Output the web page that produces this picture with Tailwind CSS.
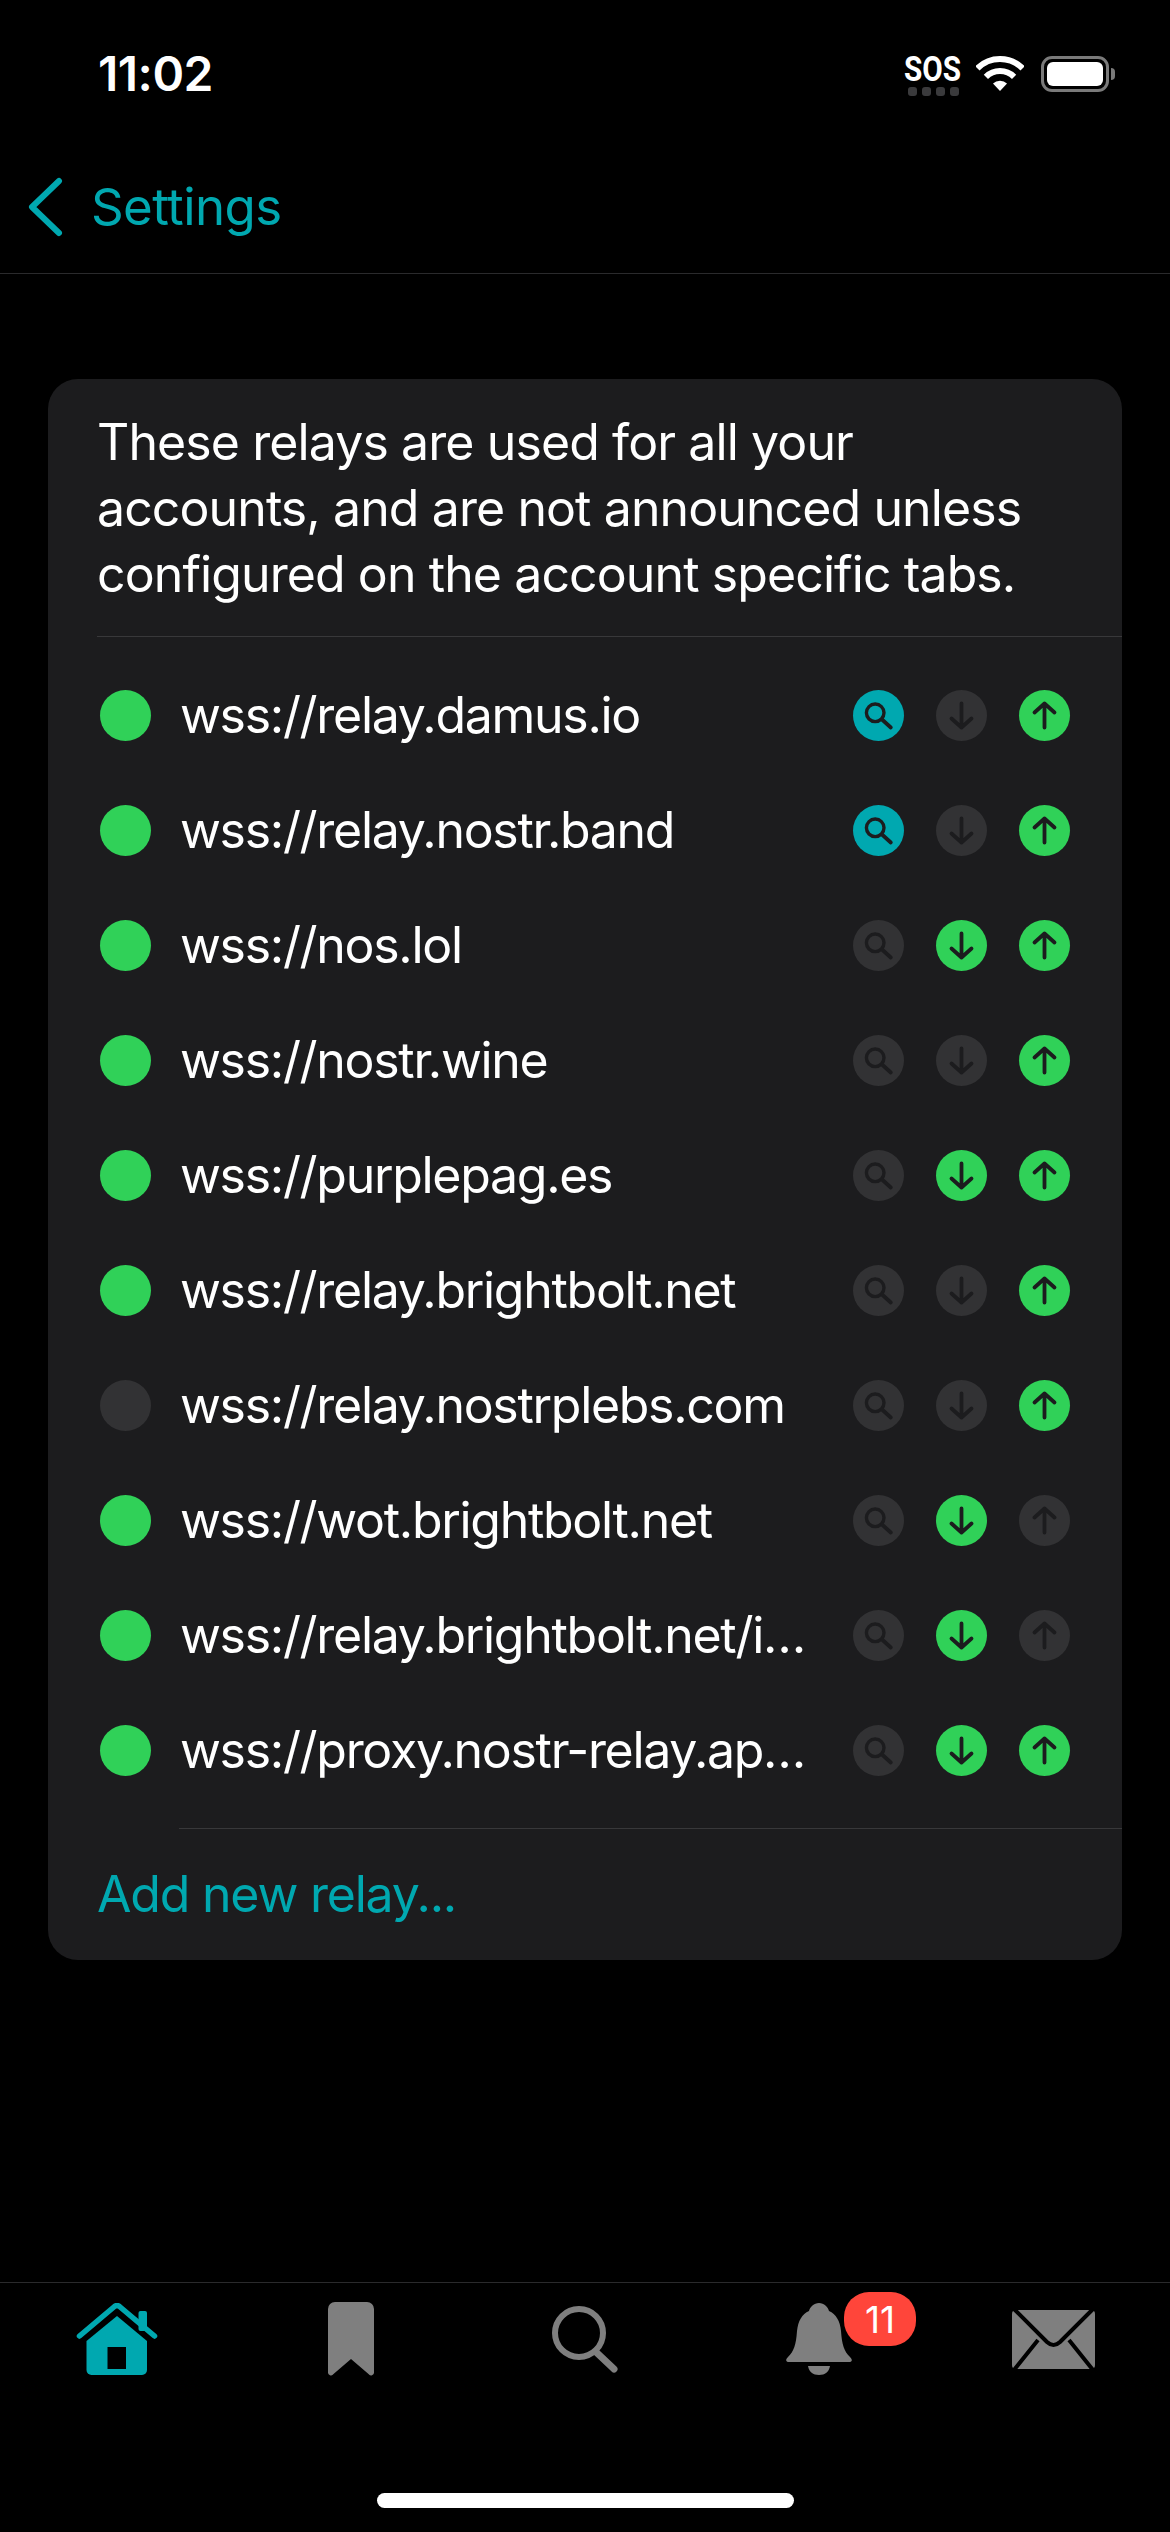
<!DOCTYPE html>
<html lang="en">
  <head>
    <meta charset="UTF-8" />
    <meta name="viewport" content="width=device-width, initial-scale=1.0" />
    <title>Relays</title>
    <script src="https://cdn.jsdelivr.net/npm/@tailwindcss/browser@4"></script>
  </head>
  <body class="bg-black">
    <svg class="hidden">
      <symbol id="i-search" viewBox="-25.5 -25.5 51 51">
        <circle cx="-3.3" cy="-2.7" r="8.8" fill="none" stroke="#1c1c1e" stroke-width="3.4" />
        <path d="M3.5 4 L12.3 12" fill="none" stroke="#1c1c1e" stroke-width="3.8" stroke-linecap="round" />
      </symbol>
      <symbol id="i-down" viewBox="-25.5 -25.5 51 51">
        <path d="M0 -12 V12 M-10 3 L0 12 L10 3" fill="none" stroke="#1c1c1e" stroke-width="3.8" stroke-linecap="round" stroke-linejoin="round" />
      </symbol>
      <symbol id="i-up" viewBox="-25.5 -25.5 51 51">
        <path d="M0 12 V-12 M-10 -3 L0 -12 L10 -3" fill="none" stroke="#1c1c1e" stroke-width="3.8" stroke-linecap="round" stroke-linejoin="round" />
      </symbol>
    </svg>

    <div class="w-[1170px] h-[2532px] flex flex-col bg-black text-white font-['Inter',sans-serif]">
      <!-- status bar -->
      <div class="h-[110px] shrink-0 flex items-start justify-between pl-[98px] pr-[55px] pt-[46px]">
        <span class="text-[48px] leading-[56px] font-semibold tracking-[-0.5px]">11:02</span>
        <div class="flex items-start">
          <div class="w-[54px] flex flex-col items-center mt-[10px]">
            <span class="font-['Roboto',sans-serif] text-[35px] leading-[27px] font-bold scale-x-[0.85]">SOS</span>
            <div class="flex gap-[5px] mt-[4px]">
              <div class="w-[9px] h-[9px] rounded-[3px] bg-[#3a3a3c]"></div>
              <div class="w-[9px] h-[9px] rounded-[3px] bg-[#3a3a3c]"></div>
              <div class="w-[9px] h-[9px] rounded-[3px] bg-[#3a3a3c]"></div>
              <div class="w-[9px] h-[9px] rounded-[3px] bg-[#3a3a3c]"></div>
            </div>
          </div>
          <svg class="ml-[16px] mt-[9px]" width="48" height="36" viewBox="0 0 48 36">
            <path d="M1.4 13.4 A32 32 0 0 1 46.6 13.4" fill="none" stroke="#fff" stroke-width="6" />
            <path d="M9.9 21.9 A20 20 0 0 1 38.1 21.9" fill="none" stroke="#fff" stroke-width="6" />
            <path d="M24 36 L17 28.5 A10 10 0 0 1 31 28.5 Z" fill="#fff" />
          </svg>
          <div class="ml-[17px] mt-[10px] w-[68px] h-[36px] rounded-[11px] border-[3px] border-[#7a7a7a] p-[3px]">
            <div class="w-full h-full rounded-[6px] bg-white"></div>
          </div>
          <div class="ml-[2px] mt-[22px] w-[4px] h-[12px] rounded-r-[4px] bg-[#7a7a7a]"></div>
        </div>
      </div>

      <!-- nav -->
      <div class="h-[164px] shrink-0 border-b border-[#2a2a2c] flex items-start pl-[27px] pt-[66px] text-[#00a8b0]">
        <svg width="36" height="60" viewBox="0 0 36 60" class="mt-[1px]">
          <path d="M32 4 L5 30 L32 56" fill="none" stroke="currentColor" stroke-width="6" stroke-linecap="round" stroke-linejoin="round" />
        </svg>
        <span class="ml-[28px] mt-[1px] text-[51px] leading-[60px] tracking-[-0.6px]">Settings</span>
      </div>

      <!-- relay card -->
      <main class="flex-1 pt-[105px] px-[48px]">
        <div class="bg-[#1c1c1e] rounded-[30px] text-[50px] tracking-[-1.3px]">
          <div class="ml-[49px] pt-[30px] pb-[29px] pr-[30px] border-b border-[#38383a] leading-[66px] tracking-[-0.9px]">
            These relays are used for all your<br />accounts, and are not announced unless<br />configured on the account specific tabs.
          </div>

          <div class="pt-[21px] pl-[52px] pr-[52px]">
            <div class="h-[115px] flex items-center">
              <div class="w-[51px] h-[51px] rounded-full bg-[#30d158] shrink-0"></div>
              <div class="ml-[29px] mr-[47px] flex-1 min-w-0 truncate">wss://relay.damus.io</div>
              <div class="flex gap-[32px] shrink-0">
                <div class="w-[51px] h-[51px] rounded-full bg-[#00a8b0]"><svg class="w-full h-full"><use href="#i-search" /></svg></div>
                <div class="w-[51px] h-[51px] rounded-full bg-[#323234]"><svg class="w-full h-full"><use href="#i-down" /></svg></div>
                <div class="w-[51px] h-[51px] rounded-full bg-[#30d158]"><svg class="w-full h-full"><use href="#i-up" /></svg></div>
              </div>
            </div>
            <div class="h-[115px] flex items-center">
              <div class="w-[51px] h-[51px] rounded-full bg-[#30d158] shrink-0"></div>
              <div class="ml-[29px] mr-[47px] flex-1 min-w-0 truncate">wss://relay.nostr.band</div>
              <div class="flex gap-[32px] shrink-0">
                <div class="w-[51px] h-[51px] rounded-full bg-[#00a8b0]"><svg class="w-full h-full"><use href="#i-search" /></svg></div>
                <div class="w-[51px] h-[51px] rounded-full bg-[#323234]"><svg class="w-full h-full"><use href="#i-down" /></svg></div>
                <div class="w-[51px] h-[51px] rounded-full bg-[#30d158]"><svg class="w-full h-full"><use href="#i-up" /></svg></div>
              </div>
            </div>
            <div class="h-[115px] flex items-center">
              <div class="w-[51px] h-[51px] rounded-full bg-[#30d158] shrink-0"></div>
              <div class="ml-[29px] mr-[47px] flex-1 min-w-0 truncate">wss://nos.lol</div>
              <div class="flex gap-[32px] shrink-0">
                <div class="w-[51px] h-[51px] rounded-full bg-[#323234]"><svg class="w-full h-full"><use href="#i-search" /></svg></div>
                <div class="w-[51px] h-[51px] rounded-full bg-[#30d158]"><svg class="w-full h-full"><use href="#i-down" /></svg></div>
                <div class="w-[51px] h-[51px] rounded-full bg-[#30d158]"><svg class="w-full h-full"><use href="#i-up" /></svg></div>
              </div>
            </div>
            <div class="h-[115px] flex items-center">
              <div class="w-[51px] h-[51px] rounded-full bg-[#30d158] shrink-0"></div>
              <div class="ml-[29px] mr-[47px] flex-1 min-w-0 truncate">wss://nostr.wine</div>
              <div class="flex gap-[32px] shrink-0">
                <div class="w-[51px] h-[51px] rounded-full bg-[#323234]"><svg class="w-full h-full"><use href="#i-search" /></svg></div>
                <div class="w-[51px] h-[51px] rounded-full bg-[#323234]"><svg class="w-full h-full"><use href="#i-down" /></svg></div>
                <div class="w-[51px] h-[51px] rounded-full bg-[#30d158]"><svg class="w-full h-full"><use href="#i-up" /></svg></div>
              </div>
            </div>
            <div class="h-[115px] flex items-center">
              <div class="w-[51px] h-[51px] rounded-full bg-[#30d158] shrink-0"></div>
              <div class="ml-[29px] mr-[47px] flex-1 min-w-0 truncate">wss://purplepag.es</div>
              <div class="flex gap-[32px] shrink-0">
                <div class="w-[51px] h-[51px] rounded-full bg-[#323234]"><svg class="w-full h-full"><use href="#i-search" /></svg></div>
                <div class="w-[51px] h-[51px] rounded-full bg-[#30d158]"><svg class="w-full h-full"><use href="#i-down" /></svg></div>
                <div class="w-[51px] h-[51px] rounded-full bg-[#30d158]"><svg class="w-full h-full"><use href="#i-up" /></svg></div>
              </div>
            </div>
            <div class="h-[115px] flex items-center">
              <div class="w-[51px] h-[51px] rounded-full bg-[#30d158] shrink-0"></div>
              <div class="ml-[29px] mr-[47px] flex-1 min-w-0 truncate">wss://relay.brightbolt.net</div>
              <div class="flex gap-[32px] shrink-0">
                <div class="w-[51px] h-[51px] rounded-full bg-[#323234]"><svg class="w-full h-full"><use href="#i-search" /></svg></div>
                <div class="w-[51px] h-[51px] rounded-full bg-[#323234]"><svg class="w-full h-full"><use href="#i-down" /></svg></div>
                <div class="w-[51px] h-[51px] rounded-full bg-[#30d158]"><svg class="w-full h-full"><use href="#i-up" /></svg></div>
              </div>
            </div>
            <div class="h-[115px] flex items-center">
              <div class="w-[51px] h-[51px] rounded-full bg-[#323234] shrink-0"></div>
              <div class="ml-[29px] mr-[47px] flex-1 min-w-0 truncate">wss://relay.nostrplebs.com</div>
              <div class="flex gap-[32px] shrink-0">
                <div class="w-[51px] h-[51px] rounded-full bg-[#323234]"><svg class="w-full h-full"><use href="#i-search" /></svg></div>
                <div class="w-[51px] h-[51px] rounded-full bg-[#323234]"><svg class="w-full h-full"><use href="#i-down" /></svg></div>
                <div class="w-[51px] h-[51px] rounded-full bg-[#30d158]"><svg class="w-full h-full"><use href="#i-up" /></svg></div>
              </div>
            </div>
            <div class="h-[115px] flex items-center">
              <div class="w-[51px] h-[51px] rounded-full bg-[#30d158] shrink-0"></div>
              <div class="ml-[29px] mr-[47px] flex-1 min-w-0 truncate">wss://wot.brightbolt.net</div>
              <div class="flex gap-[32px] shrink-0">
                <div class="w-[51px] h-[51px] rounded-full bg-[#323234]"><svg class="w-full h-full"><use href="#i-search" /></svg></div>
                <div class="w-[51px] h-[51px] rounded-full bg-[#30d158]"><svg class="w-full h-full"><use href="#i-down" /></svg></div>
                <div class="w-[51px] h-[51px] rounded-full bg-[#323234]"><svg class="w-full h-full"><use href="#i-up" /></svg></div>
              </div>
            </div>
            <div class="h-[115px] flex items-center">
              <div class="w-[51px] h-[51px] rounded-full bg-[#30d158] shrink-0"></div>
              <div class="ml-[29px] mr-[47px] flex-1 min-w-0 truncate">wss://relay.brightbolt.net/i…</div>
              <div class="flex gap-[32px] shrink-0">
                <div class="w-[51px] h-[51px] rounded-full bg-[#323234]"><svg class="w-full h-full"><use href="#i-search" /></svg></div>
                <div class="w-[51px] h-[51px] rounded-full bg-[#30d158]"><svg class="w-full h-full"><use href="#i-down" /></svg></div>
                <div class="w-[51px] h-[51px] rounded-full bg-[#323234]"><svg class="w-full h-full"><use href="#i-up" /></svg></div>
              </div>
            </div>
            <div class="h-[115px] flex items-center">
              <div class="w-[51px] h-[51px] rounded-full bg-[#30d158] shrink-0"></div>
              <div class="ml-[29px] mr-[47px] flex-1 min-w-0 truncate">wss://proxy.nostr-relay.ap…</div>
              <div class="flex gap-[32px] shrink-0">
                <div class="w-[51px] h-[51px] rounded-full bg-[#323234]"><svg class="w-full h-full"><use href="#i-search" /></svg></div>
                <div class="w-[51px] h-[51px] rounded-full bg-[#30d158]"><svg class="w-full h-full"><use href="#i-down" /></svg></div>
                <div class="w-[51px] h-[51px] rounded-full bg-[#30d158]"><svg class="w-full h-full"><use href="#i-up" /></svg></div>
              </div>
            </div>
          </div>

          <div class="mt-[20px] ml-[131px] border-b border-[#38383a]"></div>
          <div class="h-[131px] pl-[49px] flex items-center text-[#00a8b0] tracking-[-1.2px]">Add new relay...</div>
        </div>
      </main>

      <!-- tab bar -->
      <footer class="shrink-0 border-t border-[#2a2a2c]">
        <div class="h-[112px] grid grid-cols-5 place-items-center">
          <svg width="82" height="72" viewBox="0 0 82 72">
            <rect x="62.5" y="8" width="8.5" height="20" rx="2" fill="#00a8b0" />
            <path d="M3.5 33 L38.5 3.5 Q41 1.6 43.5 3.5 L78.5 33" fill="none" stroke="#00a8b0" stroke-width="5.5" stroke-linecap="round" stroke-linejoin="round" />
            <path d="M41 13 L71 38 V67 a5 5 0 0 1 -5 5 H15.5 a5 5 0 0 1 -5 -5 V38 Z" fill="#00a8b0" />
            <rect x="31.5" y="44" width="18.5" height="22" fill="#000" />
          </svg>
          <svg width="46" height="74" viewBox="0 0 46 74">
            <path d="M7 0 H39 a7 7 0 0 1 7 7 V70 a3 3 0 0 1 -5.5 2 L23 57 L5.5 72 a3 3 0 0 1 -5.5 -2 V7 a7 7 0 0 1 7 -7 Z" fill="#7f7f7f" />
          </svg>
          <svg width="66" height="67" viewBox="0 0 66 67">
            <circle cx="27" cy="27" r="24" fill="none" stroke="#7f7f7f" stroke-width="6" />
            <path d="M44 46 L62 63" fill="none" stroke="#7f7f7f" stroke-width="7" stroke-linecap="round" />
          </svg>
          <div class="relative w-[66px] h-[72px]">
            <svg width="66" height="72" viewBox="0 0 66 72">
              <path d="M33 0 C38 0 42 4 43 8 C50 11 54 18 55 28 C56 42 58 48 64 54 C67 57 66 59 63 59 H3 C0 59 -1 57 2 54 C8 48 10 42 11 28 C12 18 16 11 23 8 C24 4 28 0 33 0 Z" fill="#7f7f7f" />
              <path d="M22 63 H44 C43 69 39 72 33 72 C27 72 23 69 22 63 Z" fill="#7f7f7f" />
            </svg>
            <div class="absolute left-[58px] top-[-11px] w-[72px] h-[54px] rounded-[25px] bg-[#ff453a] flex items-center justify-center text-[37px] leading-none">11</div>
          </div>
          <svg width="83" height="59" viewBox="0 0 83 59">
            <rect width="83" height="59" rx="4" fill="#7f7f7f" />
            <path d="M2 -1 L35 32 Q41.5 38 48 32 L81 -1 M2 60 L26 30 M81 60 L57 30" fill="none" stroke="#000" stroke-width="4" />
          </svg>
        </div>
        <div class="h-[137px] pt-[98px]">
          <div class="mx-auto w-[417px] h-[15px] rounded-full bg-white"></div>
        </div>
      </footer>
    </div>
  </body>
</html>
